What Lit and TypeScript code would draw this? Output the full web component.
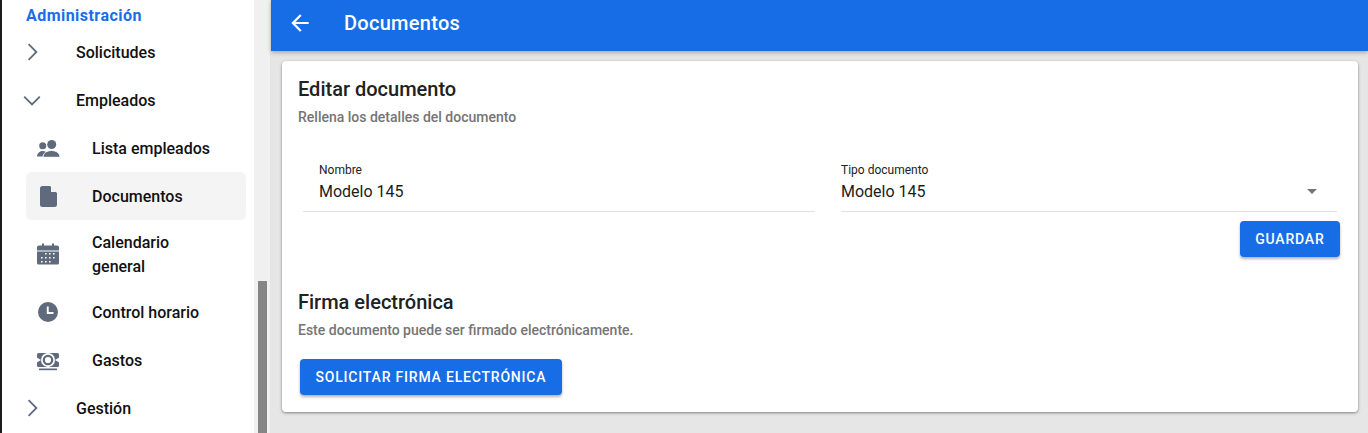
import { LitElement, html, css } from "lit";
import { customElement } from "lit/decorators.js";

const chevR = html`<svg class="chev" viewBox="0 0 24 24" width="24" height="24"><path d="M8.600 4.200 16.400 12l-7.800 7.800" fill="none" stroke="#5f6b7c" stroke-width="1.800"/></svg>`;
const chevD = html`<svg class="chev" viewBox="0 0 24 24" width="24" height="24"><path d="M4.200 8.600 12 16.400l7.800-7.800" fill="none" stroke="#5f6b7c" stroke-width="1.800"/></svg>`;
const people = html`<svg viewBox="0 0 24 24" width="24" height="24">
  <circle cx="6.700" cy="9.700" r="3.500" fill="#5f6b7c"/>
  <path fill="#5f6b7c" d="M1 20.500c0-3 2.500-5.500 5.500-5.500 1.500 0 2.800.4 4 1.200L8 20.500z"/>
  <circle cx="15.700" cy="8.500" r="4.500" fill="#5f6b7c"/>
  <path fill="#5f6b7c" stroke="#fff" stroke-width="1" d="M7 21.300c0-4 3.500-6.800 8.500-6.800s8.500 2.800 8.500 6.800z"/>
</svg>`;
const doc = html`<svg viewBox="0 0 26 26" width="26" height="26">
  <path fill="#5f6b7c" d="M7.500 3H15l7 7v11.500a2.500 2.500 0 0 1-2.500 2.500h-12A2.500 2.500 0 0 1 5 21.500v-16A2.500 2.500 0 0 1 7.500 3z"/>
  <path fill="#f4f4f4" d="M16 3.500V9h5.500z"/>
</svg>`;
const cal = html`<svg viewBox="0 0 24 24" width="24" height="24">
  <path fill="#5f6b7c" d="M6 1.500h2v2h8v-2h2v2h3a2 2 0 0 1 2 2v3H1v-3a2 2 0 0 1 2-2h3z"/>
  <path fill="#5f6b7c" d="M1 9.500h22V21a1.500 1.500 0 0 1-1.500 1.500h-19A1.500 1.500 0 0 1 1 21z"/>
  <path fill="#fff" d="M9 11h1.600v1.600H9zM13 11h1.600v1.600H13zM17 11h1.600v1.600H17zM5 15h1.600v1.600H5zM9 15h1.600v1.600H9zM13 15h1.600v1.600H13zM17 15h1.600v1.600H17zM5 19h1.600v1.600H5zM9 19h1.600v1.600H9zM13 19h1.600v1.600H13z"/>
</svg>`;
const clock = html`<svg viewBox="0 0 24 24" width="24" height="24"><path fill="#5f6b7c" d="M12 2a10 10 0 1 0 0 20 10 10 0 0 0 0-20zm-1.200 4.500h1.900v5.600h4.800v1.900h-6.700z"/></svg>`;
const money = html`<svg viewBox="0 0 24 24" width="24" height="24">
  <rect x="1" y="5" width="22" height="14" rx="1.500" fill="#5f6b7c"/>
  <path fill="#fff" d="M0 9l5 3-5 3zM24 9l-5 3 5 3z"/>
  <circle cx="12" cy="12" r="7" fill="#fff"/>
  <circle cx="12" cy="12" r="4.200" fill="none" stroke="#5f6b7c" stroke-width="2.200"/>
  <rect x="3" y="20.500" width="18" height="1.700" fill="#5f6b7c"/>
</svg>`;
const back = html`<svg viewBox="0 0 24 24" width="26" height="26"><path fill="#fff" d="M20 11H7.830l5.590-5.590L12 4l-8 8 8 8 1.410-1.410L7.830 13H20v-2z"/></svg>`;

@customElement("app-root")
export class AppRoot extends LitElement {
  static styles = css`
    :host { display: block; height: 433px; overflow: hidden; font-family: Roboto, sans-serif; background: #e6e6e6; }
    .page { display: flex; height: 433px; }
    .edge { width: 2px; background: #1c1c1c; flex: none; }
    .side { width: 252px; flex: none; background: #fff; padding-top: 4px; box-sizing: border-box; }
    .track { width: 16px; flex: none; background: #f0f0f0; display: flex; flex-direction: column; justify-content: flex-end; align-items: center; border-right: 1px solid #e4e4e4; }
    .thumb { width: 9px; height: 152px; background: #858585; }
    .side h2 { margin: 0 0 0 24px; height: 24px; line-height: 23px; font-size: 16px; font-weight: 700; letter-spacing: .46px; color: #176ee6; }
    .row { display: flex; align-items: center; font-size: 16px; font-weight: 500; color: #111; }
    .top { height: 48px; padding-left: 18px; }
    .top .ic { width: 56px; display: flex; }
    .sub { min-height: 48px; margin: 0 8px 0 24px; border-radius: 6px; }
    .sub .ic { width: 66px; flex: none; display: flex; justify-content: center; padding-right: 22px; box-sizing: border-box; }
    .sub.active { background: #f4f4f4; }
    .sub.tall { height: 68px; line-height: 24px; }
    .sub.tall .lbl { width: 110px; margin-top: 2px; }
    .main { flex: 1; min-width: 0; display: flex; flex-direction: column; }
    .bar { height: 51px; box-sizing: border-box; flex: none; background: #166de6; color: #fff; display: flex; align-items: center; padding: 0 0 5px 16px; box-shadow: 0 2px 4px rgba(0,0,0,.25); position: relative; }
    .bar .title { margin-left: 31px; font-size: 20px; font-weight: 500; letter-spacing: .28px; }
    .bar svg { display: block; }
    .content { padding: 10px 10px 0 11px; }
    .card { height: 351px; box-sizing: border-box; background: #fff; border-radius: 4px; padding: 16px 18px 0 16px; box-shadow: 0 1px 3px rgba(0,0,0,.45); }
    .card h3 { margin: 0; font-size: 20px; line-height: 24px; font-weight: 500; color: #212121; }
    .card p { margin: 7px 0 0; font-size: 14px; line-height: 18px; font-weight: 500; color: #757575; }
    .fields { display: flex; gap: 26px; margin-top: 34px; padding-left: 5px; padding-right: 3px; }
    .field { flex: 1; height: 52px; box-sizing: border-box; border-bottom: 1px solid #e2e2de; padding-left: 16px; position: relative; }
    .field:first-child { flex: 0 0 512px; }
    .field:last-child { padding-left: 0; }
    .field label { display: block; font-size: 12px; line-height: 14px; color: #222; margin-top: 3px; }
    .field .val { font-size: 16px; line-height: 20px; color: #1c1c1c; margin-top: 5px; }
    .caret { position: absolute; right: 20px; top: 29px; width: 0; height: 0; border: 5px solid transparent; border-top-color: #757575; border-bottom: 0; }
    .actions { display: flex; justify-content: flex-end; margin-top: 9px; }
    button { border: 0; background: #166de6; color: #fff; font: 500 14px Roboto, sans-serif; letter-spacing: .8px; height: 36px; border-radius: 4px; padding: 0 15.500px; box-shadow: 0 2px 3px rgba(0,0,0,.3); }
    .sign { margin-top: 33px; }
    .sign button { margin: 20px 0 0 2px; }
  `;

  render() {
    return html`<div class="page">
      <div class="edge"></div>
      <nav class="side">
        <h2>Administración</h2>
        <div class="row top"><span class="ic">${chevR}</span>Solicitudes</div>
        <div class="row top"><span class="ic">${chevD}</span>Empleados</div>
        <div class="row sub"><span class="ic">${people}</span>Lista empleados</div>
        <div class="row sub active"><span class="ic">${doc}</span>Documentos</div>
        <div class="row sub tall"><span class="ic">${cal}</span><span class="lbl">Calendario general</span></div>
        <div class="row sub"><span class="ic">${clock}</span>Control horario</div>
        <div class="row sub"><span class="ic">${money}</span>Gastos</div>
        <div class="row top"><span class="ic">${chevR}</span>Gestión</div>
      </nav>
      <div class="track"><div class="thumb"></div></div>
      <div class="main">
        <header class="bar">${back}<span class="title">Documentos</span></header>
        <div class="content">
          <section class="card">
            <h3>Editar documento</h3>
            <p>Rellena los detalles del documento</p>
            <div class="fields">
              <div class="field"><label>Nombre</label><div class="val">Modelo 145</div></div>
              <div class="field"><label>Tipo documento</label><div class="val">Modelo 145</div><i class="caret"></i></div>
            </div>
            <div class="actions"><button>GUARDAR</button></div>
            <div class="sign">
              <h3>Firma electrónica</h3>
              <p>Este documento puede ser firmado electrónicamente.</p>
              <button>SOLICITAR FIRMA ELECTRÓNICA</button>
            </div>
          </section>
        </div>
      </div>
    </div>`;
  }
}
